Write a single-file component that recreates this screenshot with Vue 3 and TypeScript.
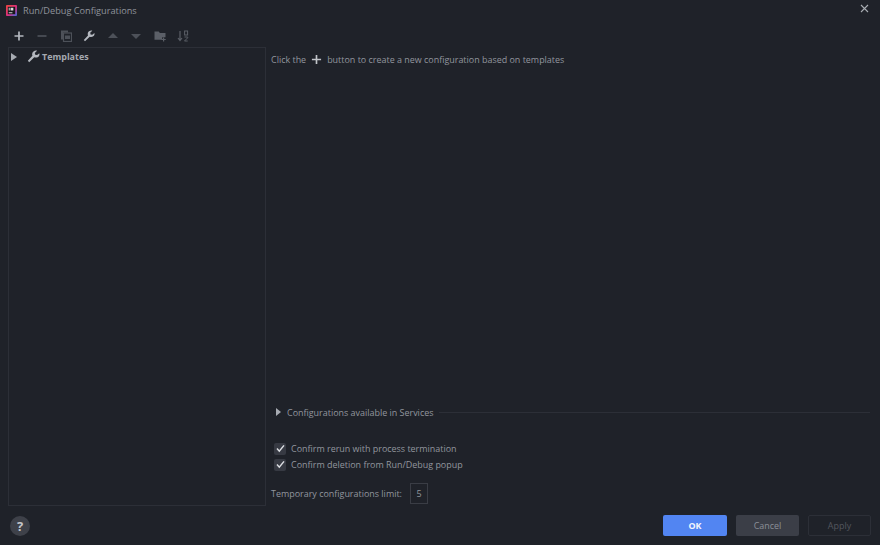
<script setup lang="ts">
const checks: string[] = [
  'Confirm rerun with process termination',
  'Confirm deletion from Run/Debug popup',
]
</script>

<template>
  <div class="dialog">
    <header class="title-bar">
      <svg class="logo" width="11" height="11" viewBox="0 0 12 12">
        <defs>
          <linearGradient id="lg" x1="0" y1="0" x2="1" y2="1">
            <stop offset="0" stop-color="#f0483e" />
            <stop offset="0.55" stop-color="#d9307e" />
            <stop offset="1" stop-color="#3b6fe0" />
          </linearGradient>
        </defs>
        <rect width="12" height="12" rx="1" fill="url(#lg)" />
        <rect x="2" y="2" width="8" height="8" fill="#16171b" />
        <rect x="3" y="8" width="4" height="1" fill="#e8e8e8" />
        <rect x="3" y="3" width="1" height="3" fill="#ddd" />
        <rect x="5" y="3" width="3" height="3" fill="#ddd" />
      </svg>
      <span class="title">Run/Debug Configurations</span>
      <svg class="close" width="9" height="9" viewBox="0 0 9 9">
        <path d="M1 1l7 7M8 1L1 8" stroke="#a9adb3" stroke-width="1.1" fill="none" />
      </svg>
    </header>

    <div class="toolbar">
      <svg class="tool" viewBox="0 0 12 12"><path d="M6 1.5v9M1.5 6h9" stroke="#b4b8bf" stroke-width="1.7" fill="none" /></svg>
      <svg class="tool" viewBox="0 0 12 12"><path d="M1.5 6h9" stroke="#4d5159" stroke-width="1.7" fill="none" /></svg>
      <svg class="tool" viewBox="0 0 12 12">
        <path d="M1 0.5h7v2H3v7H1z" fill="#4d5159" />
        <rect x="3.5" y="3" width="8" height="8.5" fill="none" stroke="#4d5159" stroke-width="1.2" />
        <rect x="5" y="5.5" width="5" height="3.5" fill="#4d5159" />
      </svg>
      <svg class="tool" viewBox="0 0 12 12"><path d="M0.8 10l1.2 1.3 4.7-4.6c1.8.6 3.6.1 4.4-1.2.5-.8.6-1.8.3-2.6L9.3 4.7 7.6 4.4 7.2 2.7 9.3.7C8.2.3 7 .6 6 1.3 4.8 2.2 4.4 3.8 5 5.4z" fill="#b4b8bf" /></svg>
      <svg class="tool" viewBox="0 0 12 12"><path d="M6 3l5 5H1z" fill="#4d5159" /></svg>
      <svg class="tool" viewBox="0 0 12 12"><path d="M1 4h10L6 9z" fill="#4d5159" /></svg>
      <svg class="tool" viewBox="0 0 12 12">
        <path d="M0.5 1.5h4.2l1.2 1.5h5.6v4.3H8.2v2.4H0.5z" fill="#5b5f67" />
        <path d="M9.6 7.4v4.2M7.5 9.5h4.2" stroke="#5b5f67" stroke-width="1.2" fill="none" />
      </svg>
      <svg class="tool" viewBox="0 0 12 12">
        <path d="M3 1v9M1 8l2 2.5L5 8" stroke="#5b5f67" stroke-width="1.2" fill="none" />
        <rect x="7.6" y="1" width="3" height="4" fill="none" stroke="#5b5f67" />
        <path d="M7.5 7h3.2v.8L7.5 11h3.2" stroke="#5b5f67" fill="none" />
      </svg>
    </div>

    <main class="body">
      <aside class="tree">
        <div class="tree-row">
          <span class="arrow"></span>
          <svg class="wrench" width="13" height="13" viewBox="0 0 12 12"><path d="M0.8 10l1.2 1.3 4.7-4.6c1.8.6 3.6.1 4.4-1.2.5-.8.6-1.8.3-2.6L9.3 4.7 7.6 4.4 7.2 2.7 9.3.7C8.2.3 7 .6 6 1.3 4.8 2.2 4.4 3.8 5 5.4z" fill="#b4b8bf" /></svg>
          <span class="tree-label">Templates</span>
        </div>
      </aside>

      <section class="details">
        <p class="hint">
          <span>Click the</span>
          <svg class="hint-plus" width="11" height="11" viewBox="0 0 12 12"><path d="M6 1v10M1 6h10" stroke="#c1c4c9" stroke-width="1.8" fill="none" /></svg>
          <span>button to create a new configuration based on templates</span>
        </p>

        <div class="services">
          <span class="arrow small"></span>
          <span class="services-label">Configurations available in Services</span>
          <span class="rule"></span>
        </div>

        <div class="checks">
          <label v-for="c in checks" :key="c" class="check">
            <span class="box">
              <svg width="9" height="9" viewBox="0 0 9 9"><path d="M1 4.6l2.3 2.6L8 1.4" stroke="#dcdee2" stroke-width="1.5" fill="none" /></svg>
            </span>
            <span>{{ c }}</span>
          </label>
        </div>

        <div class="limit">
          <span>Temporary configurations limit:</span>
          <span class="limit-input">5</span>
        </div>
      </section>
    </main>

    <footer class="footer">
      <span class="help">?</span>
      <div class="buttons">
        <span class="btn ok">OK</span>
        <span class="btn cancel">Cancel</span>
        <span class="btn apply">Apply</span>
      </div>
    </footer>
  </div>
</template>

<style>
html, body { margin: 0; background: #1f2229; }
</style>

<style scoped>
.dialog {
  width: 880px;
  height: 545px;
  background: #1f2229;
  color: #92969e;
  font-family: "Open Sans", "Noto Sans", sans-serif;
  font-size: 8.95px;
  display: flex;
  flex-direction: column;
  overflow: hidden;
}
.title-bar {
  height: 21px;
  flex: none;
  display: flex;
  align-items: center;
  padding: 0 11px 0 6px;
}
.logo { flex: none; margin-right: 6px; margin-top: -1px; }
.title { color: #8f939b; font-size: 9.2px; }
.close { margin-left: auto; margin-top: -4px; }
.toolbar {
  height: 26px;
  box-sizing: border-box;
  padding-top: 4px;
  flex: none;
  display: flex;
  align-items: center;
  padding-left: 13px;
  gap: 11.45px;
}
.tool { width: 12px; height: 12px; flex: none; }
.body {
  flex: 1;
  display: flex;
  min-height: 0;
  padding-left: 8px;
}
.tree {
  width: 258px;
  flex: none;
  border: 1px solid #2c2f37;
  box-sizing: border-box;
  padding-top: 2px;
}
.tree-row { display: flex; align-items: center; height: 13px; padding-left: 2px; }
.arrow {
  width: 0;
  height: 0;
  border-left: 6px solid #a7abb2;
  border-top: 4px solid transparent;
  border-bottom: 4px solid transparent;
  flex: none;
}
.arrow.small { border-left-width: 5px; }
.wrench { margin-left: 10px; margin-right: 2px; }
.tree-label { color: #a5a9b0; font-weight: 700; }
.details {
  flex: 1;
  min-width: 0;
  display: flex;
  flex-direction: column;
  padding: 0 10px 0 5px;
}
.hint {
  margin: 0;
  padding-top: 5px;
  height: 15px;
  display: flex;
  align-items: center;
  gap: 5px;
}
.services {
  margin-top: auto;
  display: flex;
  align-items: center;
  height: 14px;
  padding-left: 5px;
}
.services-label { margin-left: 6px; }
.rule { flex: 1; height: 1px; background: #2c2f37; margin-left: 6px; }
.checks { margin-top: 23px; display: flex; flex-direction: column; gap: 3px; }
.check { display: flex; align-items: center; height: 13px; padding-left: 3px; gap: 5px; }
.box {
  width: 12px;
  height: 12px;
  background: #373a43;
  border-radius: 2px;
  display: flex;
  align-items: center;
  justify-content: center;
}
.limit {
  margin-top: 12px;
  margin-bottom: 2px;
  height: 21px;
  display: flex;
  align-items: center;
  gap: 8px;
}
.limit-input {
  width: 16px;
  height: 19px;
  border: 1px solid #3a3d45;
  display: flex;
  align-items: center;
  justify-content: center;
}
.footer {
  height: 39px;
  flex: none;
  display: flex;
  align-items: center;
  justify-content: space-between;
  padding: 0 9px 0 10px;
}
.help {
  width: 20px;
  height: 20px;
  border-radius: 50%;
  background: #3e4149;
  color: #c4c6cb;
  font-weight: 700;
  font-size: 13px;
  display: flex;
  align-items: center;
  justify-content: center;
}
.buttons { display: flex; gap: 9px; }
.btn {
  width: 63px;
  height: 21px;
  border-radius: 2px;
  box-sizing: border-box;
  display: flex;
  align-items: center;
  justify-content: center;
}
.ok { background: #5285f2; color: #f3f6fc; font-weight: 700; width: 64px; }
.cancel { background: #3b3e47; color: #8b8f97; }
.apply { border: 1px solid #2c2f37; color: #53565e; }
</style>
